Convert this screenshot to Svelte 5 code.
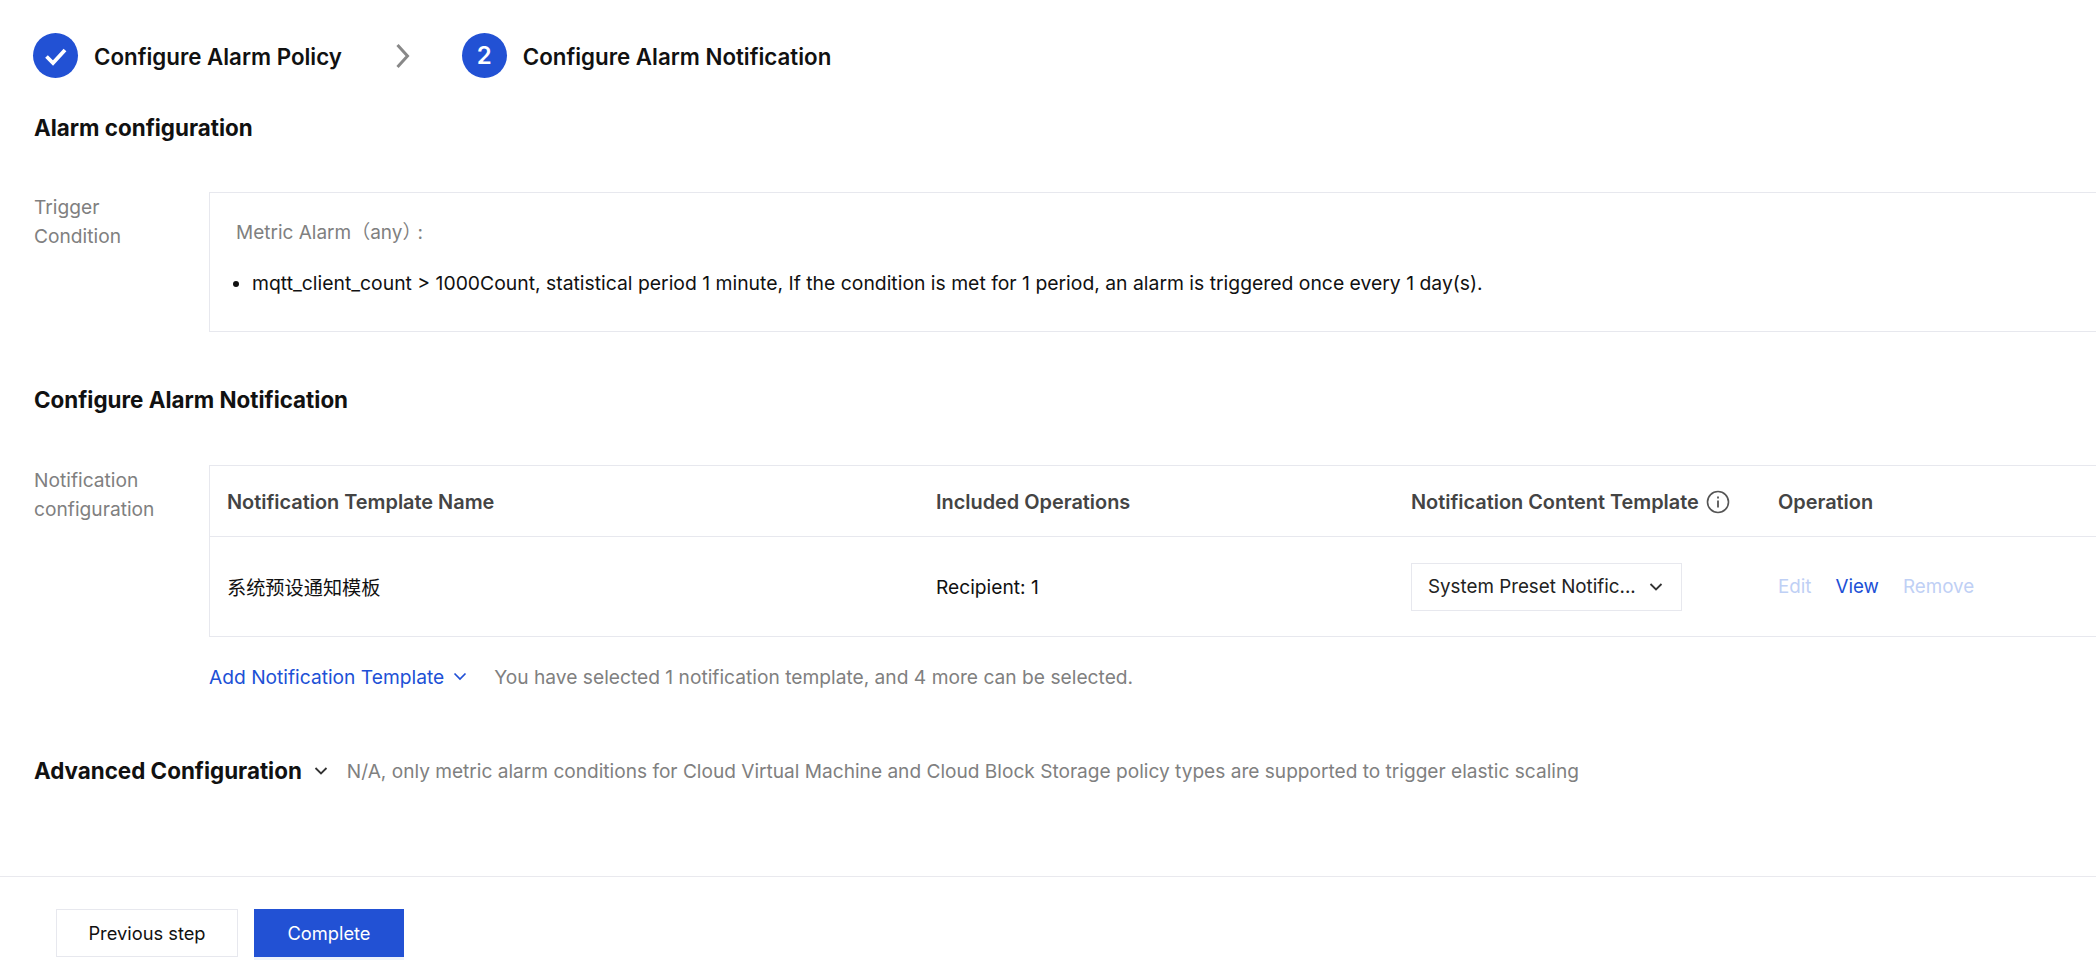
<script>
  const rows = [{ name: '系统预设通知模板', ops: 'Recipient: 1', template: 'System Preset Notific...' }]
</script>

<div class="page">
  <div class="steps">
    <div class="step">
      <span class="dot">
        <svg width="24" height="24" viewBox="0 0 24 24" fill="none"><path d="M2.5 12.5l6.5 6.5L21 6" stroke="#fff" stroke-width="3.8" /></svg>
      </span>
      <span class="step-label">Configure Alarm Policy</span>
    </div>
    <svg class="step-arrow" width="16" height="26" viewBox="0 0 16 26" fill="none"><path d="M2.5 2l10 11-10 11" stroke="#888" stroke-width="3" /></svg>
    <div class="step">
      <span class="dot num">2</span>
      <span class="step-label">Configure Alarm Notification</span>
    </div>
  </div>

  <section class="alarm">
    <h2>Alarm configuration</h2>
    <div class="field trigger">
      <div class="field-label">Trigger<br />Condition</div>
      <div class="panel">
        <div class="metric">Metric Alarm（any）<span class="colon">:</span></div>
        <ul>
          <li>mqtt_client_count &gt; 1000Count, statistical period 1 minute, If the condition is met for 1 period, an alarm is triggered once every 1 day(s).</li>
        </ul>
      </div>
    </div>
  </section>

  <section class="notify">
    <h2>Configure Alarm Notification</h2>
    <div class="field">
      <div class="field-label">Notification<br />configuration</div>
      <div class="field-body">
        <div class="table">
          <div class="tr head">
            <div class="c1">Notification Template Name</div>
            <div class="c2">Included Operations</div>
            <div class="c3">
              Notification Content Template
              <svg width="24" height="24" viewBox="0 0 24 24" fill="none">
                <circle cx="12" cy="12" r="10.5" stroke="#555" stroke-width="1.6" />
                <path d="M12 10.5v7" stroke="#555" stroke-width="1.8" />
                <path d="M12 6.5v2" stroke="#555" stroke-width="1.8" />
              </svg>
            </div>
            <div class="c4">Operation</div>
          </div>
          {#each rows as row}
            <div class="tr body">
              <div class="c1">{row.name}</div>
              <div class="c2">{row.ops}</div>
              <div class="c3">
                <div class="select">
                  <span class="select-text">{row.template}</span>
                  <svg width="16" height="16" viewBox="0 0 16 16" fill="none"><path d="M2.5 5l5.5 5.5L13.5 5" stroke="#333" stroke-width="1.8" /></svg>
                </div>
              </div>
              <div class="c4 ops">
                <span class="off">Edit</span>
                <span class="link">View</span>
                <span class="off">Remove</span>
              </div>
            </div>
          {/each}
        </div>
        <div class="add-row">
          <span class="add">
            Add Notification Template
            <svg width="16" height="16" viewBox="0 0 16 16" fill="none"><path d="M2.5 4.5l5.5 5.5 5.5-5.5" stroke="#2050d6" stroke-width="1.7" /></svg>
          </span>
          <span class="hint">You have selected 1 notification template, and 4 more can be selected.</span>
        </div>
      </div>
    </div>
  </section>

  <section class="advanced">
    <h2>Advanced Configuration</h2>
    <svg class="adv-arrow" width="16" height="16" viewBox="0 0 16 16" fill="none"><path d="M2.5 5l5.5 5.5L13.5 5" stroke="#333" stroke-width="1.8" /></svg>
    <span class="hint adv-hint">N/A, only metric alarm conditions for Cloud Virtual Machine and Cloud Block Storage policy types are supported to trigger elastic scaling</span>
  </section>

  <footer>
    <button class="btn">Previous step</button>
    <button class="btn primary">Complete</button>
  </footer>
</div>

<style>
  :global(body) {
    margin: 0;
    background: #fff;
    overflow: hidden;
  }

  .page {
    width: 2096px;
    height: 970px;
    overflow: hidden;
    font-family: Inter, "Noto Sans CJK SC", sans-serif;
    font-size: 19.2px;
    color: #111;
  }

  .steps {
    display: flex;
    align-items: center;
    height: 45px;
    padding: 33px 0 0 33px;
  }

  .step {
    display: flex;
    align-items: center;
    gap: 16px;
  }

  .dot {
    width: 45px;
    height: 45px;
    border-radius: 50%;
    background: #2251d4;
    color: #fff;
    display: flex;
    align-items: center;
    justify-content: center;
    font-size: 24px;
    font-weight: 600;
  }

  .step-label {
    font-size: 22.3px;
    font-weight: 600;
    padding-top: 2px;
  }

  .step-arrow {
    margin: 0 51px 0 53px;
  }

  h2 {
    margin: 0;
    font-size: 22.4px;
    font-weight: 700;
    line-height: 30px;
  }

  section {
    padding-left: 34px;
  }

  .alarm {
    padding-top: 35px;
  }

  .field {
    display: flex;
    margin-top: 50px;
  }

  .trigger {
    margin-top: 49px;
  }

  .field-label {
    width: 175px;
    flex: none;
    color: #808080;
    line-height: 29px;
    padding-top: 1px;
    box-sizing: border-box;
  }

  .panel {
    flex: 1;
    height: 138px;
    border: 1px solid #e7e8ee;
    border-right: 0;
    padding: 0 26px;
  }

  .metric {
    color: #808080;
    margin-top: 28px;
    line-height: 24px;
    font-size: 19px;
  }

  .colon {
    margin-left: -4px;
  }

  ul {
    margin: 26px 0 0;
    padding: 0 0 0 16px;
  }

  li {
    line-height: 24px;
    color: #111;
    font-size: 19.35px;
  }

  .notify {
    padding-top: 53px;
  }

  .field-body {
    flex: 1;
  }

  .table {
    border: 1px solid #e7e8ee;
    border-right: 0;
  }

  .tr {
    display: flex;
    align-items: center;
  }

  .head {
    height: 69px;
    padding-top: 1px;
    font-size: 19.9px;
    font-weight: 600;
    color: #444;
    border-bottom: 1px solid #e7e8ee;
  }

  .body {
    height: 99px;
  }

  .c1 {
    width: 726px;
    padding-left: 17px;
    box-sizing: border-box;
  }

  .c2 {
    width: 475px;
  }

  .c3 {
    width: 367px;
    display: flex;
    align-items: center;
    gap: 7px;
    white-space: nowrap;
  }

  .select {
    width: 271px;
    height: 48px;
    box-sizing: border-box;
    border: 1px solid #e7e8ee;
    padding: 0 17px 0 16px;
    display: flex;
    align-items: center;
    gap: 8px;
    color: #222;
  }

  .select-text {
    flex: 1;
    white-space: nowrap;
    font-size: 18.8px;
  }

  .ops {
    display: flex;
    gap: 24px;
    font-size: 18.8px;
  }

  .off {
    color: #bfd0f5;
  }

  .link {
    color: #2050d6;
  }

  .add-row {
    display: flex;
    align-items: center;
    height: 40px;
    margin-top: 20px;
  }

  .add {
    display: flex;
    align-items: center;
    gap: 8px;
    color: #2050d6;
  }

  .hint {
    color: #808080;
  }

  .add-row .hint {
    margin-left: 26px;
  }

  .advanced {
    display: flex;
    align-items: center;
    margin-top: 59px;
    height: 30px;
  }

  .adv-arrow {
    margin: 0 18px 0 11px;
  }

  .adv-hint {
    font-size: 19.1px;
  }

  footer {
    margin-top: 90px;
    border-top: 1px solid #e9e9ee;
    padding: 32px 0 0 56px;
    display: flex;
    gap: 16px;
  }

  .btn {
    height: 48px;
    width: 182px;
    background: #fff;
    border: 1px solid #e7e8ee;
    font: inherit;
    font-size: 18.3px;
    color: #111;
    padding: 0;
  }

  .primary {
    width: 150px;
    background: #2251d4;
    border: 0;
    color: #fff;
    box-shadow: 0 3px 0 #eef2fb;
  }
</style>
